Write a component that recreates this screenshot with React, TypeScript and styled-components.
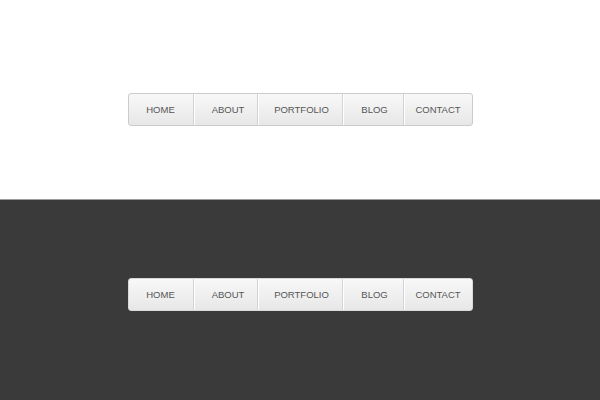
import React from "react";
import styled, { createGlobalStyle } from "styled-components";

const Global = createGlobalStyle`
  html, body { margin: 0; padding: 0; }
  body { font-family: "Liberation Sans", Arial, sans-serif; }
`;

const Page = styled.div`
  width: 600px;
  height: 400px;
  display: flex;
  flex-direction: column;
`;

const Section = styled.section<{ $dark?: boolean; $h: number; $top: number }>`
  box-sizing: border-box;
  height: ${(p) => p.$h}px;
  padding-top: ${(p) => p.$top}px;
  background: ${(p) => (p.$dark ? "#3a3a3a" : "#ffffff")};
  border-top: ${(p) => (p.$dark ? "1px solid #9c9c9c" : "none")};
  display: flex;
  justify-content: center;
  align-items: flex-start;
`;

const Nav = styled.ul<{ $dark?: boolean }>`
  list-style: none;
  margin: 0;
  padding: 0;
  display: flex;
  height: 33px;
  box-sizing: border-box;
  border: 1px solid ${(p) => (p.$dark ? "#d8d8d8" : "#cbcbcb")};
  border-radius: 3px;
  background: linear-gradient(#f8f8f8, #e7e7e7);
  overflow: hidden;
`;

const Item = styled.li<{ $w: number; $shift?: number }>`
  box-sizing: border-box;
  width: ${(p) => p.$w}px;
  height: 100%;
  display: flex;
  align-items: center;
  justify-content: center;
  padding-left: ${(p) => p.$shift ?? 0}px;
  font-size: 9.5px;
  color: #555555;
  text-transform: uppercase;
  border-left: 1px solid #ffffff;
  border-right: 1px solid #d3d3d3;
  &:first-child { border-left: none; }
  &:last-child { border-right: none; }
`;

const items: { label: string; w: number; shift?: number }[] = [
  { label: "Home", w: 65 },
  { label: "About", w: 64, shift: 5 },
  { label: "Portfolio", w: 85, shift: 3 },
  { label: "Blog", w: 61, shift: 3 },
  { label: "Contact", w: 68 },
];

function Menu({ dark }: { dark?: boolean }) {
  return (
    <Nav $dark={dark}>
      {items.map((it) => (
        <Item key={it.label} $w={it.w} $shift={it.shift}>
          {it.label}
        </Item>
      ))}
    </Nav>
  );
}

export default function App() {
  return (
    <Page>
      <Global />
      <Section $h={199} $top={93}>
        <Menu />
      </Section>
      <Section $dark $h={201} $top={78}>
        <Menu dark />
      </Section>
    </Page>
  );
}
